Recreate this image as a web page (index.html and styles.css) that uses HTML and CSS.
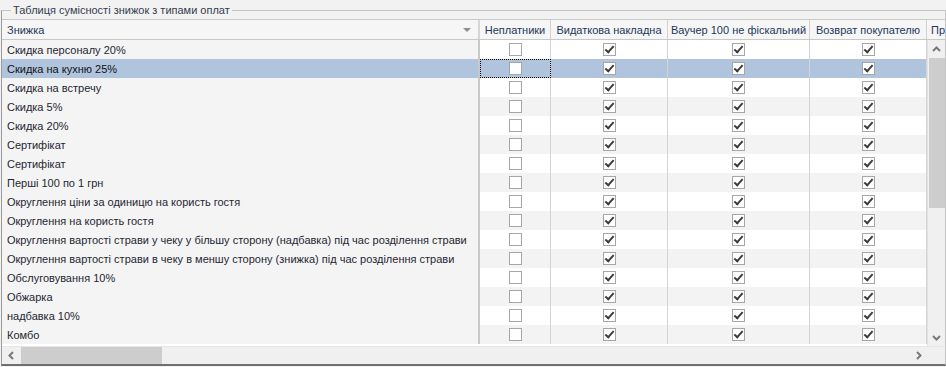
FILE: index.html
```html
<!DOCTYPE html>
<html lang="uk">
<head>
    <meta charset="UTF-8">
    <title>Таблиця сумісності знижок</title>
    <link rel="stylesheet" href="styles.css">
</head>
<body>
    <fieldset class="group">
        <legend class="group-title">Таблиця сумісності знижок з типами оплат</legend>

        <div class="grid">
            <!-- column headers -->
            <div class="grid-head">
                <div class="hcell col-name">Знижка<span class="sort-arrow"></span></div>
                <div class="hcell col-a">Неплатники</div>
                <div class="hcell col-b">Видаткова накладна</div>
                <div class="hcell col-c">Ваучер 100 не фіскальний</div>
                <div class="hcell col-d">Возврат покупателю</div>
                <div class="hcell col-e">Проплата</div>
            </div>

            <div class="grid-main">
                <div class="rows">
                    <div class="row">
                        <div class="cell col-name">Скидка персоналу 20%</div>
                        <div class="cell col-a"><span class="cb"></span></div>
                        <div class="cell col-b"><span class="cb on"></span></div>
                        <div class="cell col-c"><span class="cb on"></span></div>
                        <div class="cell col-d"><span class="cb on"></span></div>
                    </div>
                    <div class="row selected">
                        <div class="cell col-name">Скидка на кухню 25%</div>
                        <div class="cell col-a focused"><span class="cb"></span></div>
                        <div class="cell col-b"><span class="cb on"></span></div>
                        <div class="cell col-c"><span class="cb on"></span></div>
                        <div class="cell col-d"><span class="cb on"></span></div>
                    </div>
                    <div class="row">
                        <div class="cell col-name">Скидка на встречу</div>
                        <div class="cell col-a"><span class="cb"></span></div>
                        <div class="cell col-b"><span class="cb on"></span></div>
                        <div class="cell col-c"><span class="cb on"></span></div>
                        <div class="cell col-d"><span class="cb on"></span></div>
                    </div>
                    <div class="row">
                        <div class="cell col-name">Скидка 5%</div>
                        <div class="cell col-a"><span class="cb"></span></div>
                        <div class="cell col-b"><span class="cb on"></span></div>
                        <div class="cell col-c"><span class="cb on"></span></div>
                        <div class="cell col-d"><span class="cb on"></span></div>
                    </div>
                    <div class="row">
                        <div class="cell col-name">Скидка 20%</div>
                        <div class="cell col-a"><span class="cb"></span></div>
                        <div class="cell col-b"><span class="cb on"></span></div>
                        <div class="cell col-c"><span class="cb on"></span></div>
                        <div class="cell col-d"><span class="cb on"></span></div>
                    </div>
                    <div class="row">
                        <div class="cell col-name">Сертифікат</div>
                        <div class="cell col-a"><span class="cb"></span></div>
                        <div class="cell col-b"><span class="cb on"></span></div>
                        <div class="cell col-c"><span class="cb on"></span></div>
                        <div class="cell col-d"><span class="cb on"></span></div>
                    </div>
                    <div class="row">
                        <div class="cell col-name">Сертифікат</div>
                        <div class="cell col-a"><span class="cb"></span></div>
                        <div class="cell col-b"><span class="cb on"></span></div>
                        <div class="cell col-c"><span class="cb on"></span></div>
                        <div class="cell col-d"><span class="cb on"></span></div>
                    </div>
                    <div class="row">
                        <div class="cell col-name">Перші 100 по 1 грн</div>
                        <div class="cell col-a"><span class="cb"></span></div>
                        <div class="cell col-b"><span class="cb on"></span></div>
                        <div class="cell col-c"><span class="cb on"></span></div>
                        <div class="cell col-d"><span class="cb on"></span></div>
                    </div>
                    <div class="row">
                        <div class="cell col-name">Округлення ціни за одиницю на користь гостя</div>
                        <div class="cell col-a"><span class="cb"></span></div>
                        <div class="cell col-b"><span class="cb on"></span></div>
                        <div class="cell col-c"><span class="cb on"></span></div>
                        <div class="cell col-d"><span class="cb on"></span></div>
                    </div>
                    <div class="row">
                        <div class="cell col-name">Округлення на користь гостя</div>
                        <div class="cell col-a"><span class="cb"></span></div>
                        <div class="cell col-b"><span class="cb on"></span></div>
                        <div class="cell col-c"><span class="cb on"></span></div>
                        <div class="cell col-d"><span class="cb on"></span></div>
                    </div>
                    <div class="row">
                        <div class="cell col-name">Округлення вартості страви у чеку у більшу сторону (надбавка) під час розділення страви</div>
                        <div class="cell col-a"><span class="cb"></span></div>
                        <div class="cell col-b"><span class="cb on"></span></div>
                        <div class="cell col-c"><span class="cb on"></span></div>
                        <div class="cell col-d"><span class="cb on"></span></div>
                    </div>
                    <div class="row">
                        <div class="cell col-name">Округлення вартості страви в чеку в меншу сторону (знижка) під час розділення страви</div>
                        <div class="cell col-a"><span class="cb"></span></div>
                        <div class="cell col-b"><span class="cb on"></span></div>
                        <div class="cell col-c"><span class="cb on"></span></div>
                        <div class="cell col-d"><span class="cb on"></span></div>
                    </div>
                    <div class="row">
                        <div class="cell col-name">Обслуговування 10%</div>
                        <div class="cell col-a"><span class="cb"></span></div>
                        <div class="cell col-b"><span class="cb on"></span></div>
                        <div class="cell col-c"><span class="cb on"></span></div>
                        <div class="cell col-d"><span class="cb on"></span></div>
                    </div>
                    <div class="row">
                        <div class="cell col-name">Обжарка</div>
                        <div class="cell col-a"><span class="cb"></span></div>
                        <div class="cell col-b"><span class="cb on"></span></div>
                        <div class="cell col-c"><span class="cb on"></span></div>
                        <div class="cell col-d"><span class="cb on"></span></div>
                    </div>
                    <div class="row">
                        <div class="cell col-name">надбавка 10%</div>
                        <div class="cell col-a"><span class="cb"></span></div>
                        <div class="cell col-b"><span class="cb on"></span></div>
                        <div class="cell col-c"><span class="cb on"></span></div>
                        <div class="cell col-d"><span class="cb on"></span></div>
                    </div>
                    <div class="row">
                        <div class="cell col-name">Комбо</div>
                        <div class="cell col-a"><span class="cb"></span></div>
                        <div class="cell col-b"><span class="cb on"></span></div>
                        <div class="cell col-c"><span class="cb on"></span></div>
                        <div class="cell col-d"><span class="cb on"></span></div>
                    </div>
                </div>

                <!-- vertical scrollbar -->
                <div class="vscroll">
                    <div class="sbtn">
                        <svg width="9" height="6" viewBox="0 0 9 6"><polyline points="1,5 4.5,1.5 8,5" /></svg>
                    </div>
                    <div class="vthumb"></div>
                    <div class="vtrack"></div>
                    <div class="sbtn">
                        <svg width="9" height="6" viewBox="0 0 9 6"><polyline points="1,1 4.5,4.5 8,1" /></svg>
                    </div>
                </div>
            </div>

            <!-- horizontal scrollbar -->
            <div class="hscroll-row">
                <div class="hscroll">
                    <div class="sbtn">
                        <svg width="6" height="9" viewBox="0 0 6 9"><polyline points="5,1 1.5,4.5 5,8" /></svg>
                    </div>
                    <div class="hthumb"></div>
                    <div class="htrack"></div>
                    <div class="sbtn">
                        <svg width="6" height="9" viewBox="0 0 6 9"><polyline points="1,1 4.5,4.5 1,8" /></svg>
                    </div>
                </div>
                <div class="corner"></div>
            </div>
        </div>
    </fieldset>
</body>
</html>
```

FILE: styles.css
```css
body {
    font-family: "Liberation Sans", Arial, sans-serif;
    font-size: 11px;
    background-color: #f2f2f2;
    margin: 0;
    padding: 0;
    overflow: hidden;
}

.group {
    box-sizing: border-box;
    width: 945px;
    margin: 3px 0 0 1px;
    padding: 2px 0 0 0;
    border: 1px solid #c4c4c4;
    border-left-color: #9a9a9a;
    border-bottom: 2px solid #6f6f6f;
    min-width: 0;
}

.group-title {
    margin-left: 9px;
    padding: 0 2px;
    line-height: 14px;
    color: #33404f;
}

.grid {
    background-color: #fff;
}

/* header */
.grid-head {
    display: flex;
    height: 19px;
    border-top: 1px solid #c8c8c8;
    border-bottom: 1px solid #c8c8c8;
    background-color: #f6f6f6;
    overflow: hidden;
}

.hcell {
    box-sizing: border-box;
    flex: none;
    display: flex;
    align-items: center;
    justify-content: center;
    color: #22385a;
    white-space: nowrap;
    border-right: 1px solid #d2d2d2;
}

.hcell.col-name {
    justify-content: flex-start;
    padding-left: 5px;
    padding-right: 7px;
    border-right: 2px solid #d6d6d6;
}

.hcell.col-e {
    width: 18px;
    justify-content: flex-start;
    padding-left: 4px;
    overflow: hidden;
    border-right: none;
}

.sort-arrow {
    margin-left: auto;
    width: 0;
    height: 0;
    border-left: 4px solid transparent;
    border-right: 4px solid transparent;
    border-top: 4px solid #8e8e8e;
}

/* column widths (border included) */
.col-name { width: 478px; }
.col-a { width: 71px; }
.col-b { width: 117px; }
.col-c { width: 142px; }
.col-d { width: 117px; }

/* body */
.grid-main {
    display: flex;
    height: 306px;
}

.rows {
    width: 925px;
    overflow: hidden;
    background-color: #fff;
}

.row {
    display: flex;
    height: 19px;
}

.cell {
    box-sizing: border-box;
    flex: none;
    display: flex;
    align-items: center;
    justify-content: center;
    border-right: 1px solid #d4d4d4;
}

.cell.col-name {
    justify-content: flex-start;
    padding-left: 5px;
    color: #1f2733;
    white-space: nowrap;
    overflow: hidden;
    background-color: #f4f4f4;
    border-right: 2px solid #c8c8c8;
}

.row:nth-child(even) .cell {
    background-color: #f3f3f3;
}

.row:nth-child(even) .cell.col-name {
    background-color: #f4f4f4;
}

.row.selected .cell,
.row.selected .cell.col-name {
    background-color: #b0c4de;
    color: #111;
}

.cell.focused {
    outline: 1px dotted #000;
    outline-offset: -1px;
}

/* check boxes */
.cb {
    position: relative;
    box-sizing: border-box;
    width: 13px;
    height: 13px;
    border: 1px solid #a6a6a6;
    background-color: #fff;
}

.cb.on::after {
    content: "";
    position: absolute;
    left: 3px;
    top: 0;
    width: 3px;
    height: 7px;
    border-right: 2px solid #3c3c3c;
    border-bottom: 2px solid #3c3c3c;
    transform: rotate(42deg);
}

/* scrollbars */
.vscroll {
    width: 18px;
    display: flex;
    flex-direction: column;
    background-color: #f0f0f0;
    border-left: 1px solid #e2e2e2;
    box-sizing: border-box;
}

.sbtn {
    flex: none;
    display: flex;
    align-items: center;
    justify-content: center;
    width: 17px;
    height: 17px;
}

.sbtn svg polyline {
    fill: none;
    stroke: #7a7a7a;
    stroke-width: 2;
}

.vthumb {
    flex: none;
    height: 150px;
    margin: 1px 0 0 1px;
    background-color: #cdcdcd;
}

.vtrack {
    flex: 1;
}

.hscroll-row {
    display: flex;
    height: 17px;
    border-top: 1px solid #e6e6e6;
}

.hscroll {
    width: 925px;
    display: flex;
    background-color: #f0f0f0;
}

.hthumb {
    flex: none;
    width: 141px;
    margin-left: 2px;
    background-color: #cdcdcd;
}

.htrack {
    flex: 1;
}

.corner {
    flex: 1;
    background-color: #f0f0f0;
}
```
